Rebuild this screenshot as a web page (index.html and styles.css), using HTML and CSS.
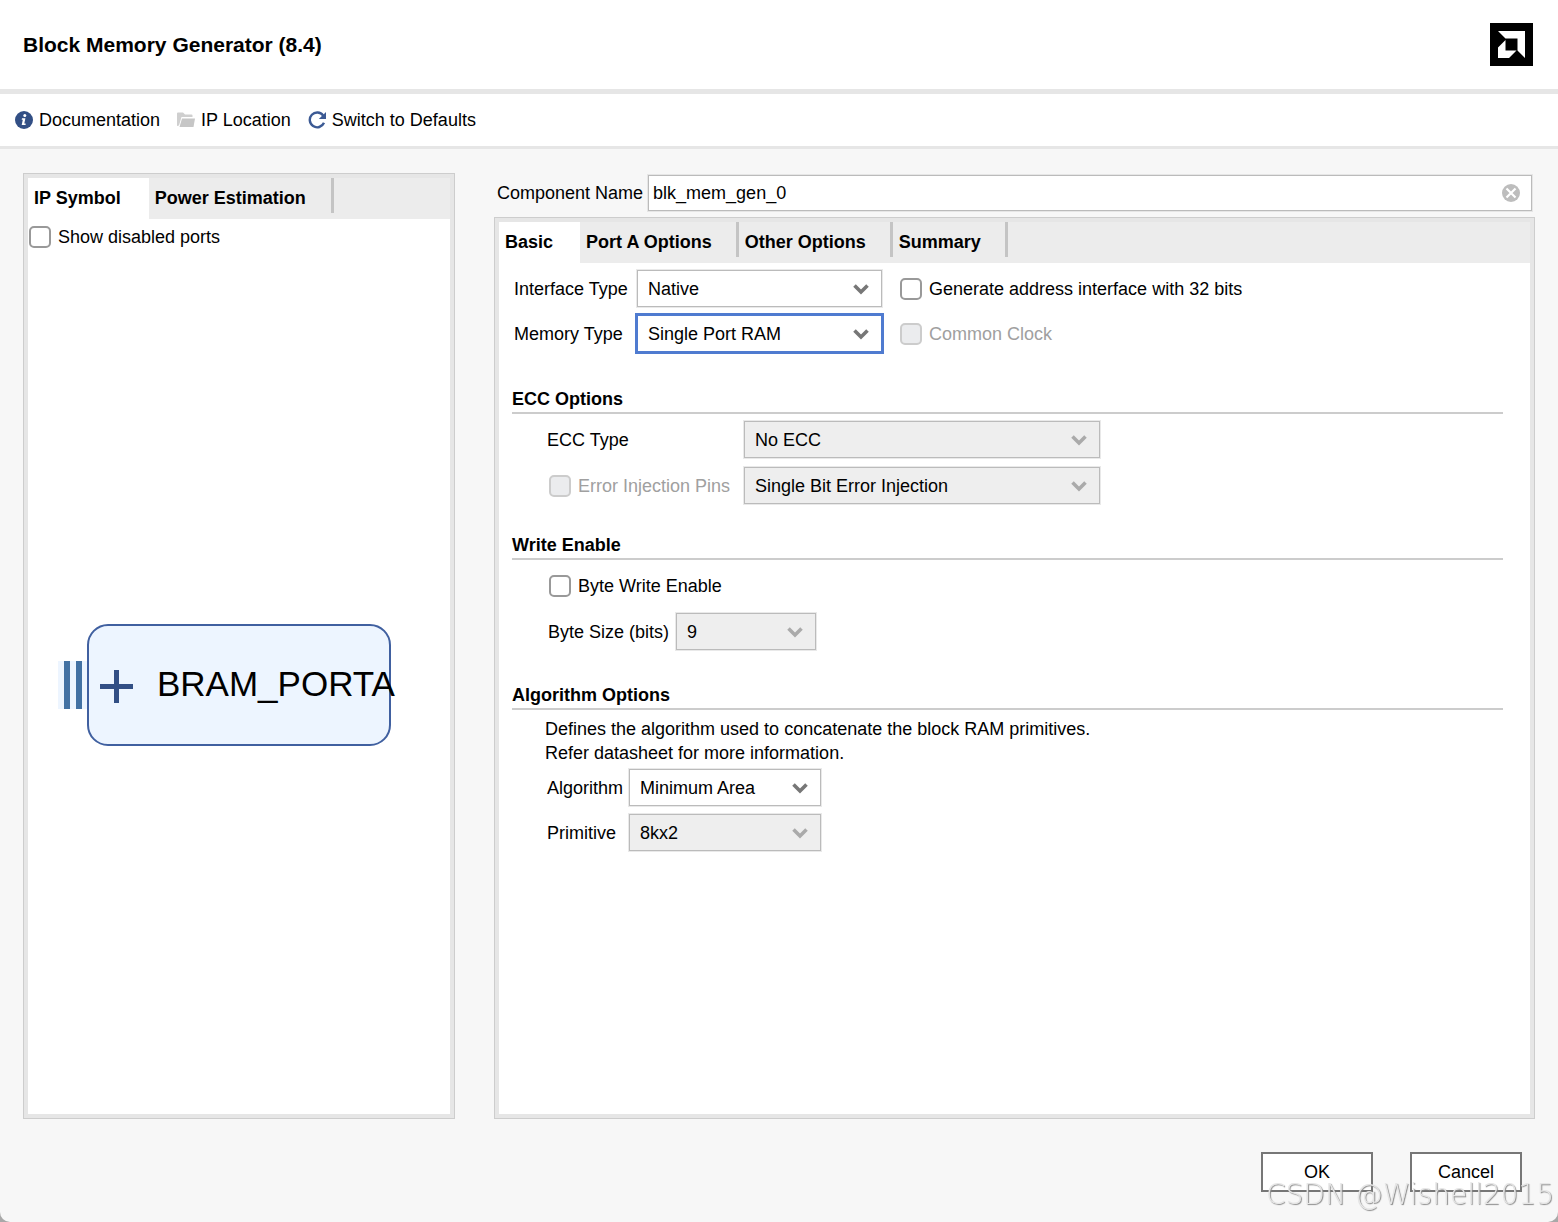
FILE: index.html
```html
<!DOCTYPE html>
<html lang="en">
<head>
    <meta charset="UTF-8">
    <meta name="viewport" content="width=device-width, initial-scale=1.0">
    <title>Block Memory Generator (8.4)</title>
    <link rel="stylesheet" href="styles.css">
</head>
<body>
    <svg width="0" height="0" class="defs" aria-hidden="true">
        <symbol id="chevron" viewBox="0 0 16 11">
            <path d="M1.500 1.500 L8 8 L14.500 1.500" fill="none" stroke="currentColor" stroke-width="3.600"/>
        </symbol>
    </svg>

    <div class="window">
        <header class="header">
            <h1>Block Memory Generator (8.4)</h1>
            <svg class="logo" viewBox="0 0 43 43" width="43" height="43" role="img" aria-label="AMD">
                <rect width="43" height="43"/>
                <path d="M8 8H35V35L27.500 27.500V15.500H15.500Z" fill="#fff"/>
                <path d="M15.500 17L8 24.500V35H19L26.500 27.500H15.500Z" fill="#fff"/>
            </svg>
        </header>

        <nav class="toolbar">
            <button type="button">
                <svg width="18" height="18" viewBox="0 0 18 18">
                    <circle cx="9" cy="9" r="9" fill="#324f85"/>
                    <circle cx="9.800" cy="4.600" r="1.500" fill="#fff"/>
                    <path d="M7 7.300H10.400L9.300 12.400H10.600V13.900H6.700L7.800 8.800H6.700Z" fill="#fff"/>
                </svg>
                Documentation
            </button>
            <button type="button">
                <svg width="18" height="18" viewBox="0 0 18 18">
                    <path d="M0 15V2.500Q0 1.500 1 1.500H6L8 3.500H14.500Q15.500 3.500 15.500 4.500V6H4.500L2 14.500Z" fill="#cfcfcf"/>
                    <path d="M5 7.500H18L16.500 16H2.500Z" fill="#c6c6c6"/>
                </svg>
                IP Location
            </button>
            <button type="button">
                <svg width="18" height="18" viewBox="0 0 18 18">
                    <path d="M15.200 4.600A7.400 7.400 0 1 0 16 11.800" fill="none" stroke="#3c5a94" stroke-width="2.400"/>
                    <path d="M18 1V8H10.800Z" fill="#3c5a94"/>
                </svg>
                Switch to Defaults
            </button>
        </nav>

        <main class="content">
            <section class="panel preview">
                <div class="tabs">
                    <button type="button" class="tab active">IP Symbol</button>
                    <button type="button" class="tab">Power Estimation</button>
                </div>
                <label class="check show-ports"><input type="checkbox"> Show disabled ports</label>
                <div class="symbol">
                    <svg viewBox="0 0 368 124" width="368" height="124">
                        <rect x="3" y="38" width="30" height="48" fill="#edf5ff"/>
                        <rect x="9" y="38" width="6" height="48" fill="#4271a3"/>
                        <rect x="21" y="38" width="6" height="48" fill="#4271a3"/>
                        <rect x="33" y="2" width="302" height="120" rx="20" fill="#edf5ff" stroke="#4060a0" stroke-width="2"/>
                        <path d="M45 63.500H78M61.500 47V80" stroke="#324f85" stroke-width="5"/>
                        <text x="102" y="73">BRAM_PORTA</text>
                    </svg>
                </div>
            </section>

            <div class="settings">
                <div class="component">
                    <label for="component">Component Name</label>
                    <div class="name-box">
                        <input type="text" id="component" value="blk_mem_gen_0">
                        <button type="button" aria-label="Clear">
                            <svg width="18" height="18" viewBox="0 0 18 18">
                                <circle cx="9" cy="9" r="9" fill="#bdbdbd"/>
                                <path d="M4.500 4.500L13.500 13.500M13.500 4.500L4.500 13.500" stroke="#fff" stroke-width="2.200"/>
                            </svg>
                        </button>
                    </div>
                </div>

                <section class="panel">
                    <div class="tabs">
                        <button type="button" class="tab active">Basic</button>
                        <button type="button" class="tab">Port A Options</button>
                        <button type="button" class="tab">Other Options</button>
                        <button type="button" class="tab">Summary</button>
                    </div>

                    <form class="form">
                        <div class="grid types">
                            <label for="interface">Interface Type</label>
                            <div class="select">
                                <select id="interface"><option>Native</option></select>
                                <svg><use href="#chevron"/></svg>
                            </div>
                            <label class="check"><input type="checkbox"> Generate address interface with 32 bits</label>
                            <label for="memory">Memory Type</label>
                            <div class="select focused">
                                <select id="memory"><option>Single Port RAM</option></select>
                                <svg><use href="#chevron"/></svg>
                            </div>
                            <label class="check disabled"><input type="checkbox" disabled> Common Clock</label>
                        </div>

                        <h2>ECC Options</h2>
                        <div class="grid ecc">
                            <label for="ecc">ECC Type</label>
                            <div class="select">
                                <select id="ecc" disabled><option>No ECC</option></select>
                                <svg><use href="#chevron"/></svg>
                            </div>
                            <label class="check disabled"><input type="checkbox" disabled> Error Injection Pins</label>
                            <div class="select">
                                <select aria-label="Error injection type" disabled><option>Single Bit Error Injection</option></select>
                                <svg><use href="#chevron"/></svg>
                            </div>
                        </div>

                        <h2>Write Enable</h2>
                        <div class="grid write">
                            <label class="check wide"><input type="checkbox"> Byte Write Enable</label>
                            <label for="bytesize">Byte Size (bits)</label>
                            <div class="select">
                                <select id="bytesize" disabled><option>9</option></select>
                                <svg><use href="#chevron"/></svg>
                            </div>
                        </div>

                        <h2>Algorithm Options</h2>
                        <p>Defines the algorithm used to concatenate the block RAM primitives.<br>Refer datasheet for more information.</p>
                        <div class="grid algorithm">
                            <label for="algorithm">Algorithm</label>
                            <div class="select">
                                <select id="algorithm"><option>Minimum Area</option></select>
                                <svg><use href="#chevron"/></svg>
                            </div>
                            <label for="primitive">Primitive</label>
                            <div class="select">
                                <select id="primitive" disabled><option>8kx2</option></select>
                                <svg><use href="#chevron"/></svg>
                            </div>
                        </div>
                    </form>
                </section>
            </div>
        </main>

        <footer class="footer">
            <button type="button">OK</button>
            <button type="button">Cancel</button>
        </footer>
    </div>
    <div class="watermark">CSDN @Wishell2015</div>
</body>
</html>
```
FILE: styles.css
```css
* {
    box-sizing: border-box;
}
body {
    margin: 0;
    font-family: "Liberation Sans", Arial, sans-serif;
    font-size: 18px;
    color: #000;
    background-color: #a8a8a8;
}
button, input, select {
    font: inherit;
    color: inherit;
}
button {
    border: none;
    background: none;
    padding: 0;
}
.defs {
    position: absolute;
}
.window {
    display: flex;
    flex-direction: column;
    min-height: 100vh;
    background-color: #f7f7f7;
    border-radius: 0 0 10px 10px;
}

/* header and toolbar */
.header {
    display: flex;
    align-items: center;
    justify-content: space-between;
    height: 94px;
    padding: 0 25px 0 23px;
    background-color: #fff;
    border-bottom: 5px solid #e6e6e6;
}
h1 {
    margin: 0;
    font-size: 21px;
}
.toolbar {
    display: flex;
    align-items: center;
    gap: 17px;
    height: 55px;
    padding: 0 15px;
    background-color: #fff;
    border-bottom: 3px solid #e6e6e6;
}
.toolbar button {
    display: flex;
    align-items: center;
    gap: 6px;
    line-height: 22px;
}

/* panels */
.content {
    flex: 1;
    display: grid;
    grid-template-columns: 432px 1fr;
    gap: 39px;
    padding: 24px 23px 0;
}
.panel {
    display: flex;
    flex-direction: column;
    border: 1px solid #cdcdcd;
    background-color: #fff;
    box-shadow: inset 0 0 0 4px #e6e6e6;
    padding: 4px;
}
.tabs {
    display: flex;
    height: 41px;
    background-color: #ececec;
}
.tab {
    position: relative;
    padding: 0 27px 0 6px;
    font-weight: bold;
}
.preview .tab {
    padding-right: 28px;
}
.tab::after {
    content: "";
    position: absolute;
    top: 0;
    right: 0;
    width: 3px;
    height: 35px;
    background-color: #c4c4c4;
}
.tab.active {
    background-color: #fff;
}
.tab.active::after {
    display: none;
}

/* check boxes */
.check {
    display: flex;
    align-items: center;
    gap: 7px;
}
.check input {
    appearance: none;
    width: 22px;
    height: 22px;
    margin: 0;
    border: 2px solid #999;
    border-radius: 5px;
    background-color: #fff;
}
.check input:disabled {
    border-color: #ccc;
    background-color: #ebecee;
}
.check.disabled {
    color: #a0a0a0;
}
.show-ports {
    height: 36px;
    padding-left: 1px;
    line-height: 22px;
}
.symbol {
    flex: 1;
    display: flex;
    align-items: center;
    justify-content: center;
}
.symbol text {
    font-size: 35px;
}

/* component name */
.settings {
    display: flex;
    flex-direction: column;
    gap: 6px;
}
.settings .panel {
    flex: 1;
}
.component {
    display: flex;
    align-items: center;
    gap: 5px;
    padding: 2px 3px 0;
    line-height: 22px;
}
.name-box {
    position: relative;
    flex: 1;
}
.name-box input {
    display: block;
    width: 100%;
    height: 36px;
    padding: 0 40px 0 4px;
    border: 1px solid #bbb;
    background-color: #fff;
    outline: 1px solid #e6e6e6;
}
.name-box button {
    position: absolute;
    top: 9px;
    right: 12px;
    width: 18px;
    height: 18px;
}
.name-box svg {
    display: block;
}

/* form */
.form {
    padding: 7px 27px 20px 13px;
}
.grid {
    display: grid;
    align-items: center;
    justify-content: start;
    row-gap: 8px;
}
.grid label {
    line-height: 22px;
}
.types {
    grid-template-columns: 123px 245px auto;
    padding-left: 2px;
}
.types .check {
    padding-left: 18px;
}
.ecc {
    grid-template-columns: 197px 356px;
    row-gap: 9px;
    padding-left: 35px;
}
.ecc .check {
    padding-left: 2px;
}
.write {
    grid-template-columns: 128px 140px;
    padding-left: 36px;
}
.wide {
    grid-column: span 2;
    height: 38px;
    padding-left: 1px;
}
.algorithm {
    grid-template-columns: 82px 192px;
    padding-left: 35px;
}
h2 {
    margin: 35px 0 7px;
    padding-bottom: 1px;
    border-bottom: 2px solid #ccc;
    font-size: 18px;
    line-height: 24px;
}
.ecc + h2 {
    margin-top: 29px;
}
.write + h2 {
    margin-top: 33px;
}
.form p {
    margin: 0 0 4px;
    padding-left: 33px;
    line-height: 24px;
}
.select {
    position: relative;
}
.select select {
    appearance: none;
    display: block;
    width: 100%;
    height: 37px;
    padding: 0 36px 0 10px;
    border: 1px solid #bbb;
    border-radius: 0;
    background-color: #fff;
    outline: 1px solid #e9e9e9;
}
.select select:disabled {
    background-color: #eee;
    color: #000;
    opacity: 1;
}
.select.focused select {
    outline: 3px solid #4f7bd0;
    outline-offset: -1px;
}
.select svg {
    position: absolute;
    top: 14px;
    right: 13px;
    width: 16px;
    height: 11px;
    color: #777;
    pointer-events: none;
}
.select select:disabled + svg {
    color: #aaa;
}

/* footer */
.footer {
    display: flex;
    justify-content: flex-end;
    gap: 37px;
    padding: 33px 36px 30px;
}
.footer button {
    width: 112px;
    height: 40px;
    border: 2px solid #777;
    background-color: #fff;
}
.watermark {
    position: fixed;
    right: 4px;
    bottom: 10px;
    font-family: "DejaVu Sans", sans-serif;
    font-size: 28px;
    font-weight: 200;
    line-height: 34px;
    color: #e6e6e6;
    text-shadow: 1px 1px 1px #888;
    pointer-events: none;
}
```
